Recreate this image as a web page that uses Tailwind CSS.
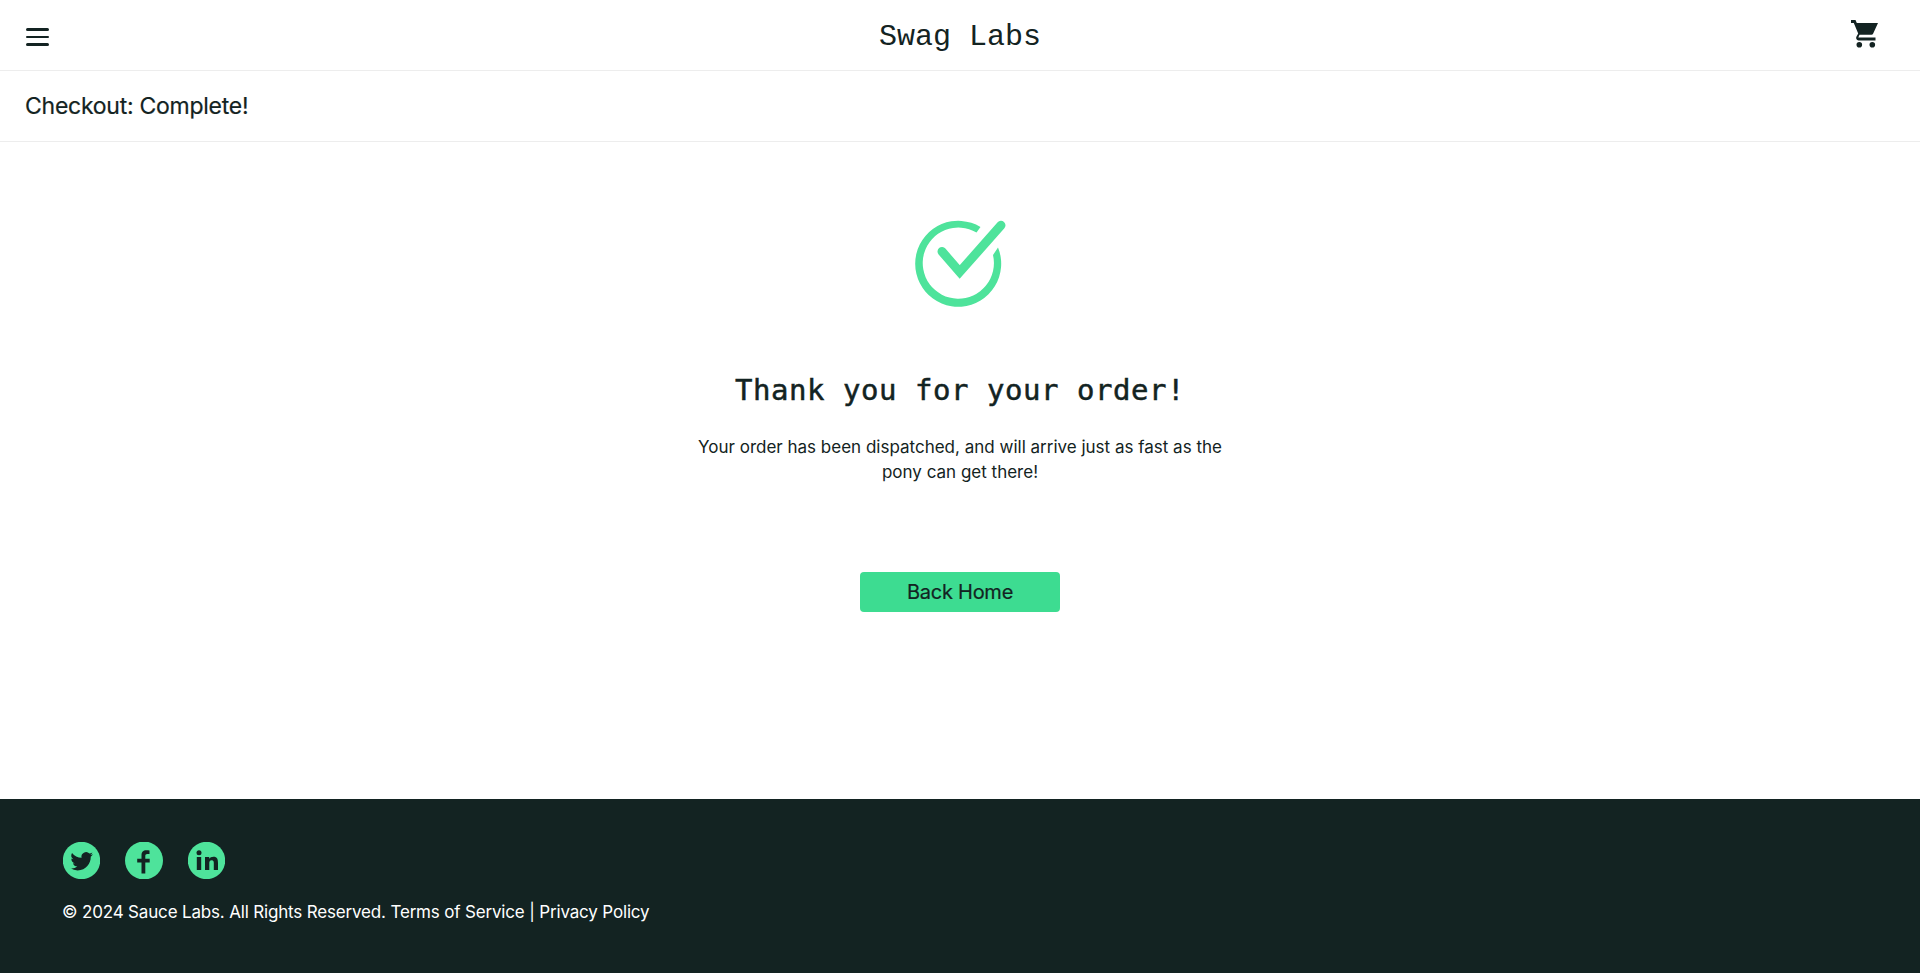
<!DOCTYPE html>
<html lang="en">
<head>
<meta charset="utf-8">
<title>Swag Labs</title>
<script src="https://cdn.jsdelivr.net/npm/@tailwindcss/browser@4"></script>
</head>
<body class="flex h-screen flex-col overflow-hidden bg-white font-['Inter',sans-serif] text-[#132322]">
  <header>
    <div class="grid h-[71px] grid-cols-3 items-center border-b border-[#ededed]">
      <button class="ml-[26px] mt-1 flex w-[23px] flex-col gap-[4.7px]" aria-label="Open menu">
        <span class="h-[2.6px] w-full rounded-full bg-[#132322]"></span>
        <span class="h-[2.6px] w-full rounded-full bg-[#132322]"></span>
        <span class="h-[2.6px] w-full rounded-full bg-[#132322]"></span>
      </button>
      <div class="pt-1 text-center font-['Liberation_Mono',monospace] text-[30px] leading-[36px]">Swag Labs</div>
      <a class="mr-[41px] -mt-0.5 justify-self-end" aria-label="Cart">
        <svg class="h-7 w-7" viewBox="0 0 28 28" fill="#132322"><path d="M0 0h4.500l1.300 2.900H27L22.200 13.500a2 2 0 0 1-1.800 1.200H8.500L7.300 17.500H24.500v2.900H7.500c-2 0-3-2-2-3.800L7.200 13.500 2.800 2.900H0z"/><circle cx="8.300" cy="24.700" r="2.800"/><circle cx="21.300" cy="24.700" r="2.800"/></svg>
      </a>
    </div>
    <div class="flex h-[71px] items-center border-b border-[#ededed] px-[25px] pt-px">
      <h2 class="text-[23px] tracking-[-0.26px] [-webkit-text-stroke:0.2px_#132322]"><span>Checkout: Complete!</span></h2>
    </div>
  </header>
  <main class="flex flex-1 flex-col items-center pt-[79px]">
    <svg class="ml-px h-[90px] w-[92px] overflow-visible" viewBox="0 0 92 90" fill="none"><path fill="#4ee39b" d="M65.500 6A43 43 0 1 0 83 26.500L78 34A35.600 35.600 0 1 1 61.500 11.500z"/><path stroke="#4ee39b" stroke-width="9" stroke-linecap="round" d="M27 30.500L44.700 51 86 4.300"/></svg>
    <h1 class="mt-[59px] font-['DejaVu_Sans_Mono',monospace] text-[29px] leading-[40px] tracking-[0.54px] [-webkit-text-stroke:0.5px_#132322]"><span>Thank you for your order!</span></h1>
    <p class="mt-[25px] w-[600px] text-center text-[17px] leading-[25px]"><span>Your order has been dispatched, and will arrive just as fast as the</span><br><span>pony can get there!</span></p>
    <button class="mt-[87px] h-10 w-[200px] rounded-[4px] bg-[#3ddc91] text-[20px] tracking-[-0.25px] [-webkit-text-stroke:0.2px_#132322]"><span>Back Home</span></button>
  </main>
  <footer class="h-[174px] bg-[#132322] px-[63px] pt-[43px] text-white">
    <div class="flex gap-[25px]">
      <svg class="h-[37px] w-[37px]" viewBox="0 0 37 37"><circle cx="18.500" cy="18.500" r="18.700" fill="#4ee39b"/><path fill="#132322" transform="translate(7.500 8) scale(.94)" d="M23.950 4.570a10 10 0 0 1-2.820.770 4.960 4.960 0 0 0 2.160-2.720c-.95.550-2 .95-3.130 1.180a4.920 4.920 0 0 0-8.380 4.480C7.690 8.090 4.070 6.130 1.640 3.160a4.920 4.920 0 0 0 1.520 6.570 4.900 4.900 0 0 1-2.230-.61v.06a4.920 4.920 0 0 0 3.950 4.830 5 5 0 0 1-2.210.08 4.940 4.940 0 0 0 4.600 3.420A9.870 9.870 0 0 1 0 19.540a13.990 13.990 0 0 0 7.550 2.210c9.050 0 14-7.500 14-13.980 0-.21 0-.42-.02-.63a9.940 9.940 0 0 0 2.420-2.570z"/></svg>
      <svg class="h-[37px] w-[38px]" viewBox="0 0 38 37"><circle cx="19" cy="18.500" r="19" fill="#4ee39b"/><path fill="#132322" d="M16.500 31.500V20.500h-4.300v-3.800h4.300V13.500c0-3.600 1.800-5.200 4.700-5.200 1.300 0 2.500.1 3.300.3v3.400h-2.200c-1.500 0-2 .8-2 2v2.700h4.400v3.800h-4.400v11z"/></svg>
      <svg class="h-[37px] w-[37px]" viewBox="0 0 37 37"><circle cx="18.500" cy="18.500" r="18.700" fill="#4ee39b"/><g fill="#132322"><circle cx="11" cy="10.800" r="2.500"/><path d="M8.800 15h4.400v13H8.800zM17 15h4.200v1.800c.8-1.300 2.200-2.100 4.200-2.100 4 0 4.600 2.600 4.600 6.200V28h-4.200v-6.600c0-1.700-.1-3.200-2.100-3.200-2.100 0-2.400 1.600-2.400 3.300V28H17z"/></g></svg>
    </div>
    <div class="-ml-px mt-[21px] text-[17px] leading-[25px] tracking-[-0.17px]"><span>© 2024 Sauce Labs. All Rights Reserved. Terms of Service | Privacy Policy</span></div>
  </footer>
</body>
</html>
